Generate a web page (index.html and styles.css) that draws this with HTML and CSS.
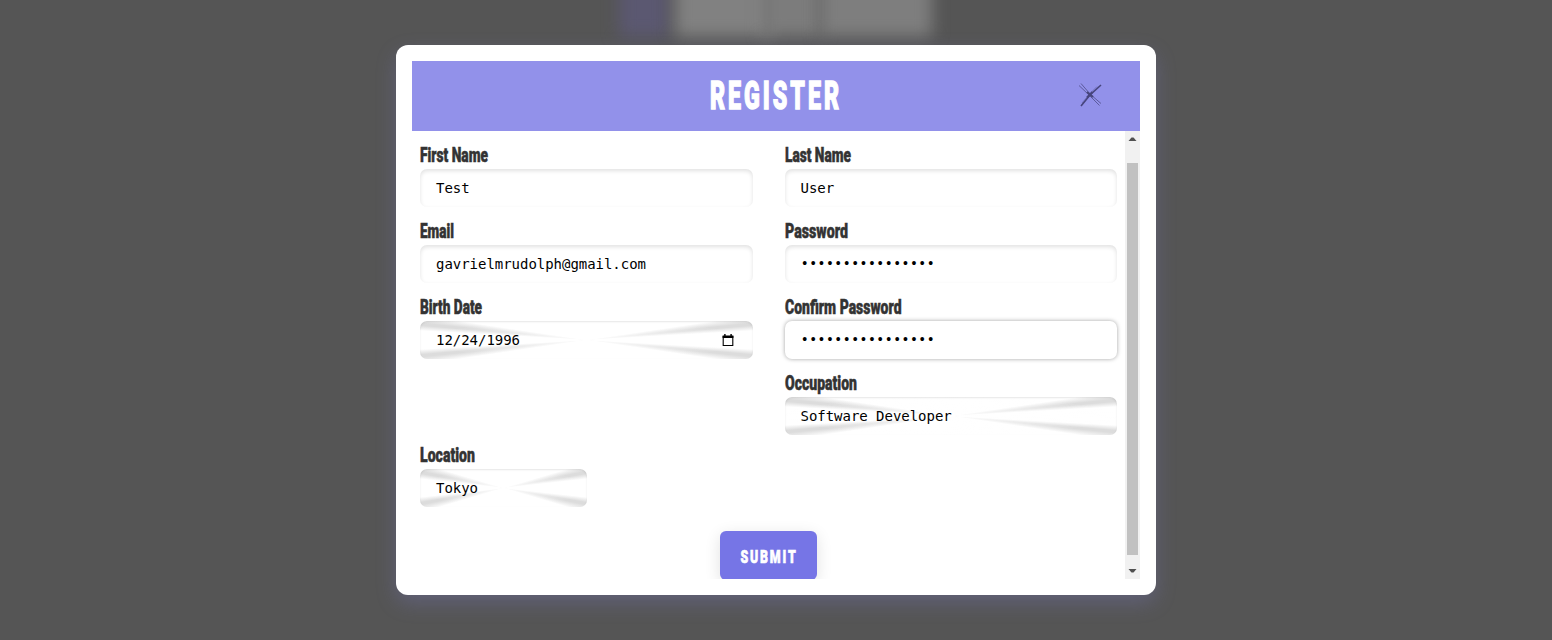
FILE: index.html
```html
<!DOCTYPE html>
<html lang="en">
<head>
<meta charset="utf-8">
<title>Register</title>
<link rel="stylesheet" href="styles.css">
</head>
<body>
<div class="backdrop"><span class="glow glow-accent"></span><span class="glow glow-a"></span><span class="glow glow-b"></span><span class="glow glow-c"></span></div>
<main class="modal">
  <header class="header">
    <svg class="display title" width="140" height="40"><text x="4" y="33" textLength="132" lengthAdjust="spacingAndGlyphs">REGISTER</text></svg>
    <svg class="close" width="26" height="26" viewBox="0 0 26 26">
      <path d="M2 4.500 12 14 22.500 24.500M4 2.500 13.500 13.500 24 22.500" stroke-width="1" opacity=".7"/>
      <path d="M24 4 13 14 4 25" stroke-width="1.600"/>
      <path d="M20 5.500 13 12.500 5 22" stroke-width="1" opacity=".4"/>
      <path d="M10 11 16 16M15.500 11 10 16.500" stroke-width="2"/>
    </svg>
  </header>
  <div class="body">
    <form class="form">
      <div class="field"><svg class="display label"><text y="18.500" textLength="68" lengthAdjust="spacingAndGlyphs">First Name</text></svg><div class="input">Test</div></div>
      <div class="field"><svg class="display label"><text y="18.500" textLength="66" lengthAdjust="spacingAndGlyphs">Last Name</text></svg><div class="input">User</div></div>
      <div class="field"><svg class="display label"><text y="18.500" textLength="34" lengthAdjust="spacingAndGlyphs">Email</text></svg><div class="input">gavrielmrudolph@gmail.com</div></div>
      <div class="field"><svg class="display label"><text y="18.500" textLength="63" lengthAdjust="spacingAndGlyphs">Password</text></svg><div class="input secret">••••••••••••••••</div></div>
      <div class="field"><svg class="display label"><text y="18.500" textLength="62" lengthAdjust="spacingAndGlyphs">Birth Date</text></svg><div class="input rays">12/24/1996<svg class="calendar" width="12" height="13" viewBox="0 0 12 13"><path d="M1.200 2.500h9.600v9H1.200z" fill="none" stroke="#000" stroke-width="1.100"/><path d="M.6 1.500h10.800v2.500H.6zM2.200 0h1.400v2H2.200zM8.400 0h1.400v2H8.400z"/></svg></div></div>
      <div class="field"><svg class="display label"><text y="18.500" textLength="116.500" lengthAdjust="spacingAndGlyphs">Confirm Password</text></svg><div class="input secret focused">••••••••••••••••</div></div>
      <div class="field occupation"><svg class="display label"><text y="18.500" textLength="72" lengthAdjust="spacingAndGlyphs">Occupation</text></svg><div class="input rays">Software Developer</div></div>
      <div class="field location"><svg class="display label"><text y="18.500" textLength="55" lengthAdjust="spacingAndGlyphs">Location</text></svg><div class="input rays narrow">Tokyo</div></div>
      <div class="submit"><svg class="display" width="60" height="24"><text x="1.500" y="18.500" textLength="57" lengthAdjust="spacingAndGlyphs">SUBMIT</text></svg></div>
    </form>
    <div class="scrollbar">
      <svg width="15" height="32"><path d="M3.500 10h8L8.500 6.500h-2z"/></svg>
      <div class="thumb"></div>
      <svg width="15" height="24"><path d="M3.500 14h8l-3 3.500h-2z"/></svg>
    </div>
  </div>
</main>
</body>
</html>
```
FILE: styles.css
```css
* { box-sizing: border-box; }
body {
  margin: 0;
  height: 640px;
  padding-top: 45px;
  overflow: hidden;
  background: #555;
  font: 14px "DejaVu Sans Mono", monospace;
}
.backdrop { position: absolute; top: 0; left: 0; width: 100%; height: 60px; overflow: hidden; }
.glow { position: absolute; top: -40px; height: 77px; background: #818181; filter: blur(8px); }
.glow-accent { left: 619px; width: 50px; background: #5b5871; }
.glow-a { left: 675px; width: 97px; }
.glow-b { left: 763px; width: 58px; background: #7c7c7c; }
.glow-c { left: 820px; width: 112px; background: #7e7e7e; }
.modal {
  position: relative;
  width: 760px;
  height: 550px;
  margin: 0 auto;
  padding: 16px;
  border-radius: 12px;
  background: #fff;
  box-shadow: 0 8px 20px rgba(124, 124, 200, .3);
}
.header {
  position: relative;
  display: flex;
  align-items: center;
  justify-content: center;
  height: 70px;
  background: #9291ea;
}
.display { display: block; font-family: Roboto, sans-serif; font-weight: 900; overflow: visible; }
.title { font-size: 39px; letter-spacing: 5px; fill: #fff; stroke: #fff; stroke-width: 1.4px; }
.close { position: absolute; right: 37px; top: 20px; fill: none; stroke: #46447c; }
.body { display: flex; height: 448px; overflow: hidden; }
.form {
  flex: 1;
  display: grid;
  grid-template-columns: 1fr 1fr;
  column-gap: 32px;
  align-content: start;
  padding: 12px 8px 0;
}
.field { height: 76px; }
.occupation { grid-column: 2; height: 72px; }
.location { grid-column: 1; width: 167px; height: 88px; }
.label { width: 120px; height: 26px; font-size: 19.5px; fill: #333; stroke: #333; stroke-width: .5px; }
.input {
  display: flex;
  align-items: center;
  height: 38px;
  padding: 0 16px;
  border-radius: 7px;
  background: #fff;
  box-shadow: inset 0 2px 4px rgba(0, 0, 0, .12);
  letter-spacing: -.03px;
  white-space: pre;
}
.rays {
  --spread: 5.3deg;
  background:
    radial-gradient(closest-side, #fff, rgba(255, 255, 255, 0)),
    conic-gradient(
      #fff calc(90deg - 1.6 * var(--spread)), #dcdcdc calc(90deg - 1.1 * var(--spread)), #dcdcdc calc(90deg - .95 * var(--spread)), #fff calc(90deg - .6 * var(--spread)),
      #fff calc(90deg + .6 * var(--spread)), #dcdcdc calc(90deg + .95 * var(--spread)), #dcdcdc calc(90deg + 1.1 * var(--spread)), #fff calc(90deg + 1.6 * var(--spread)),
      #fff calc(270deg - 1.6 * var(--spread)), #dcdcdc calc(270deg - 1.1 * var(--spread)), #dcdcdc calc(270deg - .95 * var(--spread)), #fff calc(270deg - .6 * var(--spread)),
      #fff calc(270deg + .6 * var(--spread)), #dcdcdc calc(270deg + .95 * var(--spread)), #dcdcdc calc(270deg + 1.1 * var(--spread)), #fff calc(270deg + 1.6 * var(--spread)));
  box-shadow: inset 0 1px 2px rgba(0, 0, 0, .1);
}
.narrow { --spread: 10.4deg; }
.secret { font-family: "Liberation Mono", monospace; letter-spacing: 0; }
.focused { box-shadow: 0 0 4px rgba(0, 0, 0, .36); }
.calendar { margin-left: auto; margin-right: 3px; }
.submit {
  grid-column: 1 / -1;
  justify-self: center;
  display: flex;
  align-items: center;
  justify-content: center;
  width: 97px;
  height: 49px;
  border-radius: 6px;
  background: #7675e6;
  box-shadow: 0 4px 16px rgba(0, 0, 0, .12);
  fill: #fff;
  stroke: #fff;
  stroke-width: .7px;
  font-size: 19px;
  letter-spacing: 2.8px;
}
.scrollbar { display: flex; flex-direction: column; align-items: center; width: 15px; background: #f1f1f1; fill: #505050; }
.scrollbar svg { display: block; flex: none; }
.thumb { width: 11px; flex: 1; background: #c1c1c1; }
```
